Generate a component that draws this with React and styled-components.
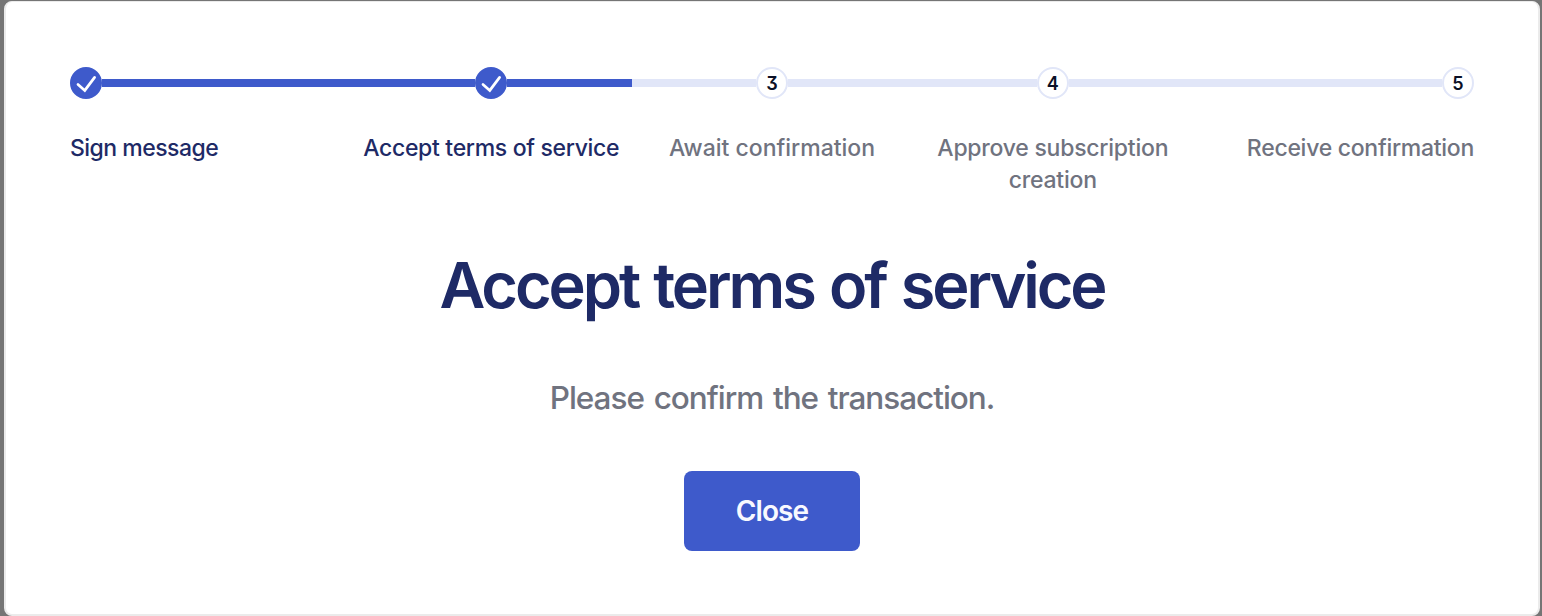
import React from "react";
import styled, { createGlobalStyle } from "styled-components";

const GlobalStyle = createGlobalStyle`
  *, *::before, *::after { box-sizing: border-box; }
  body {
    margin: 0;
    background: #757575;
    font-family: Inter, "Liberation Sans", sans-serif;
    -webkit-font-smoothing: antialiased;
  }
`;

const Dialog = styled.main`
  width: 1536px;
  height: 615px;
  margin: 1px 0 0 4px;
  padding: 65px 64px 0;
  display: flex;
  flex-direction: column;
  align-items: center;
  background: #fff;
  border: 2px solid #ebebeb;
  border-top-width: 1px;
  border-radius: 8px;
`;

const Steps = styled.ol`
  width: 1404px;
  height: 128px;
  margin: 0.4px 0 0;
  padding: 0;
  list-style: none;
  display: grid;
  grid-template-columns: repeat(5, 1fr);
`;

const Step = styled.li`
  display: flex;
  flex-direction: column;
  align-items: ${({ $align }) => $align};
  text-align: center;
`;

const Track = styled.div`
  width: 100%;
  height: 32px;
  display: flex;
  align-items: center;
`;

const Line = styled.span`
  flex: ${({ $hidden }) => ($hidden ? "0 0 0" : "1")};
  height: 8px;
  background: ${({ $done }) => ($done ? "#3e5acb" : "#e1e6f8")};
`;

const Marker = styled.span`
  flex: 0 0 32px;
  height: 32px;
  padding-top: ${({ $done }) => ($done ? 0 : 2)}px;
  display: flex;
  align-items: center;
  justify-content: center;
  border: 2px solid ${({ $done }) => ($done ? "#3e5acb" : "#e1e6f8")};
  border-radius: 50%;
  background: ${({ $done }) => ($done ? "#3e5acb" : "#fff")};
  color: #0b1026;
  font-size: 18px;
  font-weight: 600;
  line-height: 26px;
  font-feature-settings: "cv09";
`;

const Label = styled.span`
  margin-top: 32.6px;
  color: ${({ $done }) => ($done ? "#1e2a66" : "#70737f")};
  font-size: 23px;
  font-weight: 500;
  line-height: 32px;
  letter-spacing: ${({ $spacing }) => $spacing}px;
  white-space: pre-line;
`;

const Title = styled.h1`
  margin: 50px 0 0;
  color: #1e2a66;
  font-size: 63px;
  font-weight: 600;
  line-height: 80px;
  letter-spacing: -3.1px;
  word-spacing: 2.5px;
`;

const Message = styled.p`
  margin: 53px 0 0;
  color: #70737f;
  font-size: 31.5px;
  font-weight: 500;
  line-height: 40px;
  letter-spacing: -1.03px;
  word-spacing: 2.4px;
`;

const CloseButton = styled.button`
  width: 176px;
  height: 80px;
  margin-top: 52.2px;
  padding: 1px 0 0;
  border: 0;
  border-radius: 8px;
  background: #3e5acb;
  color: #f8f9ff;
  font: 600 28px/40px Inter, "Liberation Sans", sans-serif;
  letter-spacing: -0.9px;
`;

const steps = [
  { label: "Sign message", done: true, spacing: -0.52, align: "flex-start" },
  { label: "Accept terms of service", done: true, spacing: -0.32, align: "center" },
  { label: "Await confirmation", spacing: 0, align: "center" },
  { label: "Approve subscription\ncreation", spacing: -0.24, align: "center" },
  { label: "Receive confirmation", spacing: -0.28, align: "flex-end" },
];

const CheckIcon = () => (
  <svg width="28" height="28" viewBox="0 0 28 28" fill="none" aria-hidden="true">
    <path d="M6 15.4L12.8 21.4L22.6 8.4" stroke="#fff" strokeWidth="2.7" strokeLinecap="round" strokeLinejoin="miter" />
  </svg>
);

export default function App() {
  return (
    <>
      <GlobalStyle />
      <Dialog>
        <Steps>
          {steps.map((step, index) => (
            <Step key={step.label} $align={step.align}>
              <Track>
                <Line $done={step.done} $hidden={index === 0} />
                <Marker $done={step.done}>{step.done ? <CheckIcon /> : index + 1}</Marker>
                <Line $done={step.done} $hidden={index === steps.length - 1} />
              </Track>
              <Label $done={step.done} $spacing={step.spacing}>{step.label}</Label>
            </Step>
          ))}
        </Steps>
        <Title>Accept terms of service</Title>
        <Message>Please confirm the transaction.</Message>
        <CloseButton type="button">Close</CloseButton>
      </Dialog>
    </>
  );
}
